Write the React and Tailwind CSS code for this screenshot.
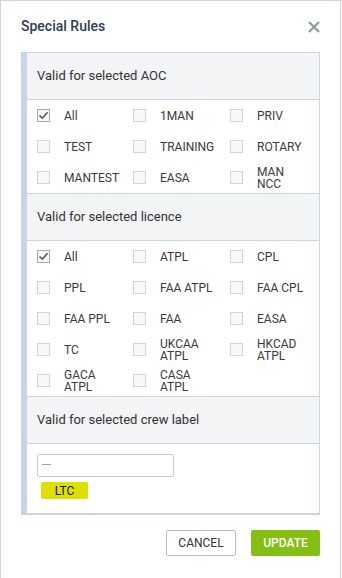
import React from "react";

const font = { fontFamily: "Roboto, 'Liberation Sans', sans-serif" };

function Box({ checked }) {
  return (
    <span
      className={
        "w-[13px] h-[13px] shrink-0 border flex items-center justify-center " +
        (checked ? "border-[#a9a9a9] bg-[#f7f7f7]" : "border-[#d4d4d4] bg-[#f8f8f8]")
      }
    >
      {checked && (
        <svg width="11" height="11" viewBox="0 0 11 11">
          <path d="M1.5 5.5 L4.3 8.2 L9.6 2.2" fill="none" stroke="#555" strokeWidth="1.6" />
        </svg>
      )}
    </span>
  );
}

function Item({ label, checked, w }) {
  return (
    <div className="flex items-center h-[31px]">
      <Box checked={checked} />
      <span className={"ml-[14px] text-[12px] leading-[12px] text-[#3a3a3a] " + w}>{label}</span>
    </div>
  );
}

function Grid({ items }) {
  return (
    <div className="grid grid-cols-[96px_97px_1fr] pl-[10px]">
      {items.map((it, i) => (
        <Item
          key={i}
          label={it[0]}
          checked={it[1]}
          w={i % 3 === 2 ? "w-[50px]" : "w-[58px]"}
        />
      ))}
    </div>
  );
}

function Header({ children, top }) {
  return (
    <div
      className={
        "bg-[#f3f4f6] flex items-center pl-[10px] text-[13px] text-[#333] border-b border-[#c9d5e5] " +
        (top ? "border-t h-[48px]" : "h-[47px]")
      }
    >
      {children}
    </div>
  );
}

export default function App() {
  const aoc = [
    ["All", true],
    ["1MAN"],
    ["PRIV"],
    ["TEST"],
    ["TRAINING"],
    ["ROTARY"],
    ["MANTEST"],
    ["EASA"],
    ["MAN NCC"],
  ];
  const lic = [
    ["All", true],
    ["ATPL"],
    ["CPL"],
    ["PPL"],
    ["FAA ATPL"],
    ["FAA CPL"],
    ["FAA PPL"],
    ["FAA"],
    ["EASA"],
    ["TC"],
    ["UKCAA ATPL"],
    ["HKCAD ATPL"],
    ["GACA ATPL"],
    ["CASA ATPL"],
  ];
  return (
    <div style={font} className="w-[342px] h-[578px] overflow-hidden bg-white">
      <div className="w-[341px] h-[600px] border border-[#c9d5e5] px-[20px]">
        <div className="h-[51px] flex items-center justify-between">
          <span className="text-[14px] font-medium text-[#2e3d52]">Special Rules</span>
          <svg width="12" height="12" viewBox="0 0 12 12">
            <path d="M1 1 L11 11 M11 1 L1 11" stroke="#8e99a6" strokeWidth="2.2" />
          </svg>
        </div>
        <div className="border border-[#c9d5e5] border-l-[6px] border-l-[#c6d4e6] border-b-2">
          <Header>Valid for selected AOC</Header>
          <Grid items={aoc} />
          <Header top>Valid for selected licence</Header>
          <Grid items={lic} />
          <Header top>Valid for selected crew label</Header>
          <div className="pl-[10px] pt-[10px] pb-[14px]">
            <div className="w-[137px] h-[23px] border border-[#c8c8c8] rounded-[2px] flex items-center pl-[4px] text-[11px] text-[#888]">
              ---
            </div>
            <div className="ml-[4px] mt-[5px] w-[47px] h-[17px] bg-[#dde000] rounded-[2px] flex items-center justify-center text-[12px] text-[#111]">
              LTC
            </div>
          </div>
        </div>
        <div className="flex justify-end gap-[15px] mt-[15px]">
          <button className="w-[70px] h-[26px] border border-[#bdbdbd] rounded-[2px] bg-white text-[12px] text-[#333]">
            CANCEL
          </button>
          <button className="w-[69px] h-[26px] rounded-[2px] bg-[#84c014] text-[12px] font-medium text-white">
            UPDATE
          </button>
        </div>
      </div>
    </div>
  );
}
